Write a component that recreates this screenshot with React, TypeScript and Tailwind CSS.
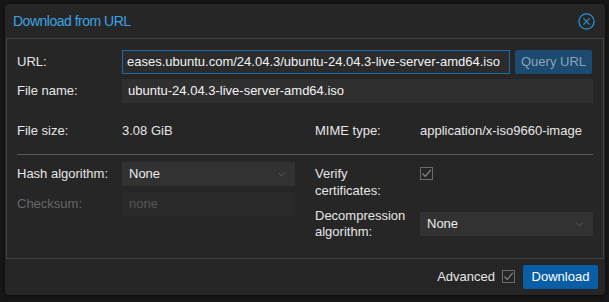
import { ChevronDown } from "lucide-react";

const font = { fontFamily: '"Liberation Sans", Arial, sans-serif' };

const CheckBox = () => (
  <svg width="13" height="13" viewBox="0 0 13 13" className="shrink-0">
    <rect x="0.5" y="0.5" width="12" height="12" fill="none" stroke="#6b6b6b" />
    <path d="M2.5 6.5 L5.2 9.3 L10.8 2.8" fill="none" stroke="#8a8a8a" strokeWidth="1.2" />
  </svg>
);

const Combo = ({ value }: { value: string }) => (
  <div className="flex h-6 flex-1 items-center justify-between bg-[#323232] pl-[7px] pr-[8px] text-[#ececec]">
    <span>{value}</span>
    <ChevronDown className="h-[11px] w-[11px] text-[#6f6f6f]" strokeWidth={1.5} />
  </div>
);

export default function App() {
  return (
    <div className="h-[302px] w-[609px] bg-[#171717] pl-[5px] pt-[4px] text-[13px]" style={font}>
      <div className="flex h-[291px] w-[600px] flex-col rounded-[4px] bg-[#262626] px-[1px] shadow-[0_1px_4px_rgba(0,0,0,0.6)]">
        {/* header */}
        <div className="flex h-[34px] shrink-0 items-center justify-between pl-[7px] pr-[9px]">
          <span className="text-[14px] tracking-[-0.5px] text-[#3aa3e3]">Download from URL</span>
          <svg width="17" height="17" viewBox="0 0 17 17">
            <circle cx="8.5" cy="8.5" r="7.6" fill="none" stroke="#2a8fd0" strokeWidth="1.3" />
            <path d="M5.4 5.4 L11.6 11.6 M11.6 5.4 L5.4 11.6" stroke="#2a8fd0" strokeWidth="1.3" />
          </svg>
        </div>

        {/* body */}
        <div className="h-[221px] shrink-0 border border-[#424242] px-[10px] pt-[11px] text-[#e6e6e6]">
          <div className="flex h-6 items-center">
            <span className="w-[105px] shrink-0">URL:</span>
            <div className="flex h-6 w-[388px] items-center border border-[#1b6aa8] bg-[#2b2b2b] pl-[4px] text-[#f2f2f2]">
              <span className="whitespace-nowrap">eases.ubuntu.com/24.04.3/ubuntu-24.04.3-live-server-amd64.iso</span>
            </div>
            <div className="ml-[5px] flex h-6 w-[77px] items-center justify-center rounded-[2px] bg-[#1c4a70] text-[#8ea3b6]">
              Query URL
            </div>
          </div>
          <div className="mt-[5px] flex h-6 items-center">
            <span className="w-[105px] shrink-0">File name:</span>
            <div className="flex h-6 w-[471px] items-center bg-[#2f2f2f] pl-[6px] text-[#f2f2f2]">
              ubuntu-24.04.3-live-server-amd64.iso
            </div>
          </div>
          <div className="mt-[16px] flex h-6 items-center">
            <div className="flex w-[298px] items-center">
              <span className="w-[105px] shrink-0">File size:</span>
              <span>3.08 GiB</span>
            </div>
            <span className="w-[105px] shrink-0">MIME type:</span>
            <span>application/x-iso9660-image</span>
          </div>
          <div className="mt-[11px] w-[576px] border-t border-[#5a5a5a]" />

          <div className="mt-[7px] flex gap-[20px]">
            <div className="flex w-[278px] flex-col gap-[6px]">
              <div className="flex h-6 items-center">
                <span className="w-[105px] shrink-0">Hash algorithm:</span>
                <Combo value="None" />
              </div>
              <div className="flex h-6 items-center">
                <span className="w-[105px] shrink-0 text-[#686868]">Checksum:</span>
                <div className="flex h-6 flex-1 items-center bg-[#2a2a2a] pl-[7px] text-[#555555]">none</div>
              </div>
            </div>
            <div className="flex w-[278px] flex-col">
              <div className="flex h-[46px]">
                <span className="w-[105px] shrink-0 pt-[3px] leading-[17px]">
                  Verify
                  <br />
                  certificates:
                </span>
                <div className="pt-[5px]">
                  <CheckBox />
                </div>
              </div>
              <div className="flex items-center">
                <span className="w-[105px] shrink-0 leading-[16px]">
                  Decompression
                  <br />
                  algorithm:
                </span>
                <Combo value="None" />
              </div>
            </div>
          </div>
        </div>

        {/* footer */}
        <div className="flex flex-1 items-center justify-end gap-[7px] pr-[6px] pb-[1px] text-[#e6e6e6]">
          <span>Advanced</span>
          <CheckBox />
          <div className="ml-[1px] flex h-6 w-[75px] items-center justify-center rounded-[2px] bg-[#0a5ea6] text-white">
            Download
          </div>
        </div>
      </div>
    </div>
  );
}
